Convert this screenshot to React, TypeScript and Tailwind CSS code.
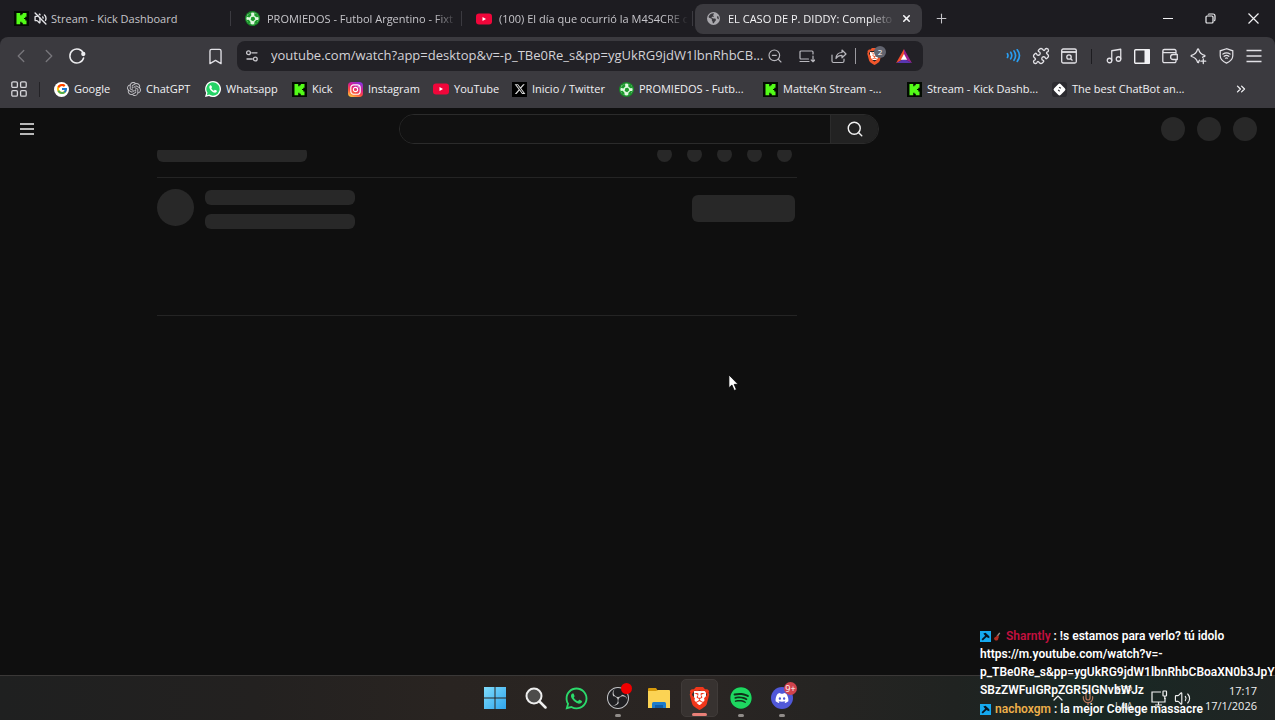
import React from "react";
import { Bookmark, ChevronLeft, ChevronRight, ChevronUp, ChevronsRight, Mic, Music, Plus, Puzzle, Search, VolumeOff, Volume2, X, ZoomOut } from "lucide-react";
import { FaEarthAmericas, FaWhatsapp, FaDiscord, FaSpotify, FaXTwitter } from "react-icons/fa6";
import { FcGoogle } from "react-icons/fc";
import { SiBrave, SiObsstudio, SiOpenai } from "react-icons/si";

const KickIcon = () => (
  <svg viewBox="0 0 32 32" className="size-[15px] shrink-0">
    <path fill="#030a02" d="M0 0h32v32H0z" />
    <path fill="#53fc18" transform="translate(4 4)" d="M1.3 0h8v5.3H12V2.7h2.7V0h8v8H20v2.7h-2.7v2.6H20V16h2.7v8h-8v-2.7H12v-2.6H9.3V24h-8Z" />
  </svg>
);

const YouTubeIcon = () => (
  <svg viewBox="0 0 16 12" className="w-4 shrink-0">
    <rect y=".5" width="16" height="11" rx="3" fill="#f0063a" />
    <path d="M6.500 3.900v4.200L10 6z" fill="#fff" />
  </svg>
);

const BallIcon = () => (
  <svg viewBox="0 0 16 16" className="size-[15px] shrink-0">
    <circle cx="8" cy="8" r="8" fill="#178a27" />
    <circle cx="8" cy="8" r="6.500" fill="#dff8df" />
    <path d="M6.800 6.500l3-.5 1.200 2.700-2.300 2.300-2.700-1.500zM1.800 6l2.400-3.300 2.300-.5.2 2.600-2 2.200zM10 1.800l3 1.700 1.500 3-2.400.2-2.200-1.900zM14.200 9.500l-1.500 3.300-2.900 1.500.3-2.800 1.900-1.900zM1.600 9.500l2.400-.3 1.800 2.300.2 2.700-2.600-1.500z" fill="#1c9a2c" />
  </svg>
);

const WhatsappIcon = () => (
  <svg viewBox="0 0 24 24" className="size-4 shrink-0">
    <path d="M12 0a12 12 0 1 1-6 22.400L0 24l1.700-6A12 12 0 0 1 12 0z" fill="#fff" />
    <path d="M12 2a10 10 0 1 1-5.500 18.400L2.800 21.300l1-3.600A10 10 0 0 1 12 2z" fill="#25d366" />
    <path d="M8.500 6.500c-.5-.3-2 .6-2 2.500 0 4 5 8.500 8.500 8.500 1.500 0 2.800-1 2.800-2.500 0-.6-2.800-2-3.300-1.700l-1 1.200c-1.500-.4-3.500-2.200-4-3.800l1-1.200c.2-.5-1-2.800-2-3z" fill="#fff" />
  </svg>
);

const InstagramIcon = () => (
  <svg viewBox="0 0 16 16" className="size-[15px] shrink-0">
    <defs>
      <linearGradient id="ig" x1="0.2" y1="1" x2="0.7" y2="0">
        <stop offset="0" stopColor="#ffc43d" />
        <stop offset="0.35" stopColor="#fb4b40" />
        <stop offset="0.65" stopColor="#d81e8e" />
        <stop offset="1" stopColor="#8a32dc" />
      </linearGradient>
    </defs>
    <rect width="16" height="16" rx="4" fill="url(#ig)" />
    <rect x="3" y="3" width="10" height="10" rx="3" fill="none" stroke="#fff" strokeWidth="1.2" />
    <circle cx="8" cy="8" r="2.300" fill="none" stroke="#fff" strokeWidth="1.2" />
    <circle cx="10.900" cy="5.100" r=".7" fill="#fff" />
  </svg>
);

const XIcon = () => (
  <span className="flex size-[15px] shrink-0 items-center justify-center bg-black">
    <FaXTwitter className="size-3 text-[#d8d8d8]" />
  </span>
);

const BotIcon = () => (
  <svg viewBox="0 0 16 16" className="size-[15px] shrink-0">
    <rect width="16" height="16" rx="3" fill="#2c2b30" />
    <rect x="3" y="3" width="10" height="10" rx="2" transform="rotate(45 8 8)" fill="#fff" />
    <path d="M7.500 5.500l2 1.200M6.500 8.500l1.800 1.300" stroke="#3b3a3f" fill="none" strokeWidth="1.200" />
  </svg>
);

const ReloadIcon = () => (
  <svg viewBox="0 0 18 18" className="size-[18px]" fill="none" stroke="#ededf0" strokeWidth="1.500" strokeLinecap="round">
    <path d="M15.600 11a7 7 0 1 1-.1-4.300" />
    <circle cx="15.300" cy="7" r="1.400" fill="#ededf0" />
  </svg>
);

const TuneIcon = () => (
  <svg viewBox="0 0 14 14" className="size-3.5 shrink-0" fill="none" stroke="#c9c8cd" strokeWidth="1.300">
    <circle cx="3.500" cy="3.800" r="1.900" />
    <path d="M6.800 3.800H12M2 10h5.200" strokeLinecap="round" />
    <circle cx="10.300" cy="10" r="1.900" />
  </svg>
);

const InstallIcon = () => (
  <svg viewBox="0 0 16 14" className="w-4" fill="none" stroke="#b8b7bd" strokeWidth="1.200" strokeLinecap="round">
    <path d="M9.500 10H2a1 1 0 0 1-1-1V3a1 1 0 0 1 1-1h11a1 1 0 0 1 1 1v2M1 12.500h9M14 7v5.500M12.200 11l1.800 1.700 1.800-1.700" />
  </svg>
);

const ShareIcon = () => (
  <svg viewBox="0 0 16 16" className="size-4" fill="none" stroke="#b8b7bd" strokeWidth="1.200" strokeLinecap="round" strokeLinejoin="round">
    <path d="M1 7v6a1.500 1.500 0 0 0 1.500 1.500h9A1.500 1.500 0 0 0 13 13v-2M5 10.500c.3-4 2.500-6 6-6V2l4 4-4 3.800V7.300c-2.800 0-4.600.8-6 3.200z" />
  </svg>
);

const BatIcon = () => (
  <svg viewBox="0 0 18 16" className="w-4">
    <path d="M9 0 0 16l9-5z" fill="#f24a2c" />
    <path d="M9 0l9 16-9-5z" fill="#9b1f8c" />
    <path d="M0 16h18l-9-5z" fill="#5a35b0" />
    <path d="M9 5.500 5.500 12h7z" fill="#fff" />
  </svg>
);

const SoundWaves = () => (
  <svg viewBox="0 0 16 14" className="w-[15px]" fill="none" stroke="#2a9df0" strokeWidth="1.800" strokeLinecap="round">
    <path d="M1.500 5c.8 1.300.8 2.700 0 4M5 3.500c1.500 2.300 1.500 4.800 0 7M8.500 2c2.200 3.200 2.200 6.800 0 10M12 .8c3.200 4.200 3.200 8.200 0 12.400" />
  </svg>
);

const TabSearchIcon = () => (
  <svg viewBox="0 0 16 16" className="size-4" fill="none" stroke="#e2e1e6" strokeWidth="1.300">
    <rect x=".7" y="1" width="14.600" height="14" rx="1.500" />
    <path d="M.7 4h14.600" strokeWidth="1.800" />
    <circle cx="8" cy="9" r="2.200" />
    <path d="m9.600 10.600 1.900 1.900" />
  </svg>
);

const SidebarIcon = () => (
  <svg viewBox="0 0 16 15" className="w-4">
    <rect x=".7" y=".7" width="14.600" height="13.600" rx="1" fill="none" stroke="#f1f1f4" strokeWidth="1.400" />
    <path d="M10.500 0H15a1 1 0 0 1 1 1v13a1 1 0 0 1-1 1h-4.500z" fill="#f1f1f4" />
  </svg>
);

const WalletIcon = () => (
  <svg viewBox="0 0 16 16" className="size-4" fill="none" stroke="#e2e1e6" strokeWidth="1.300" strokeLinejoin="round">
    <path d="M14 6.300V4.700M.8 3v10.200A1.500 1.500 0 0 0 2.300 14.700h10.200A1.500 1.500 0 0 0 14 13.200v-1.500M14 4.700V3a1.500 1.500 0 0 0-1.500-1.500H2.400C1.500 1.500.8 2.200.8 3.100s.7 1.600 1.600 1.600z" />
    <path d="M15.300 6.500h-4.200a2.500 2.500 0 0 0 0 5h4.200z" />
  </svg>
);

const LeoIcon = () => (
  <svg viewBox="0 0 17 17" className="size-[17px]" fill="none" stroke="#e2e1e6" strokeWidth="1.300" strokeLinejoin="round" strokeLinecap="round">
    <path d="M9.500 12.300c-.5.500-.8 1.300-1 2.200-.5 0-.7 0-1-.3-.7-3-1.900-4.500-6-5.700-.5-.3-.5-.8 0-1.100C5.300 6.300 6.500 5 7.500 1.300c.3-.5.800-.5 1.100 0 1 3.700 2.200 5 6 6.100.5.300.5.800 0 1.100-.8.300-1.500.5-2 .8M13.300 10.800v4.800M10.900 13.200h4.800" />
  </svg>
);

const VpnIcon = () => (
  <svg viewBox="0 0 16 17" className="w-[15px]" fill="none" stroke="#e2e1e6" strokeWidth="1.300" strokeLinecap="round">
    <path d="M8 .8 1.300 3v5.200c0 3.700 2.900 6.200 6.700 7.900 3.800-1.700 6.700-4.200 6.700-7.900V3z" />
    <path d="M4.200 6.500c2.300-1.700 5.300-1.700 7.600 0M5.500 8.800c1.500-1.200 3.500-1.200 5 0M7 10.900c.6-.5 1.400-.5 2 0" />
  </svg>
);

const FolderIcon = () => (
  <svg viewBox="0 0 24 22" className="w-6">
    <path d="M1 2a1 1 0 0 1 1-1h7l2 3H1z" fill="#d79a0b" />
    <path d="M1 4h8l2-1h11a1 1 0 0 1 1 1v17H1z" fill="#fbd354" />
    <path d="M5 21v-4.500A1.500 1.500 0 0 1 6.500 15h11a1.500 1.500 0 0 1 1.500 1.500V21z" fill="#1d7ccb" />
    <path d="M8 18h8v3H8z" fill="#0f5da8" />
  </svg>
);

const WindowsIcon = () => (
  <svg viewBox="0 0 22 22" className="size-[22px]">
    <defs>
      <linearGradient id="win" x1="0" y1="0" x2="1" y2="1">
        <stop offset="0" stopColor="#7fdcfb" />
        <stop offset="1" stopColor="#2fa5ee" />
      </linearGradient>
    </defs>
    <path d="M0 0h10.500v10.500H0zM11.500 0H22v10.500H11.500zM0 11.500h10.500V22H0zM11.500 11.500H22V22H11.500z" fill="url(#win)" />
  </svg>
);

const BraveLion = ({ large = false }: { large?: boolean }) => (
  <span className="relative flex items-center justify-center">
    <span className={large ? "absolute h-3.5 w-3 bg-white" : "absolute size-2 bg-white"} />
    <SiBrave className={large ? "relative size-[23px] text-[#f0371b]" : "relative size-[17px] text-[#f1562b]"} />
  </span>
);

const HammerBadge = () => (
  <svg viewBox="0 0 10 10" className="mr-[2px] inline-block size-[11px] align-[-2px]">
    <path d="M0 0h10v10H0z" fill="#15a9ef" />
    <path d="M3 2.200 5 1.500l3.500 3.300v1.700L6.700 6l-.8-.6L2.600 8.600l-1.200-1.200 3.300-3.100z" fill="#071421" />
  </svg>
);

const GuitarBadge = () => (
  <svg viewBox="0 0 10 10" className="mr-[4px] inline-block size-[9px] align-[-1px]">
    <path d="m4.500 5 3-4" stroke="#9c8a80" strokeWidth="1.500" />
    <path d="M5 3.800c1.900.5 1.700 2.400.9 3.200.2 1.800-1.500 3-3.100 2.400C.9 8.500.7 6.500 2.100 5.800 3.200 5.600 3.600 4.200 5 3.800z" fill="#b32e22" />
  </svg>
);

const tabs = [
  { label: "Stream - Kick Dashboard", icon: <KickIcon />, muted: true },
  { label: "PROMIEDOS - Futbol Argentino - Fixt", icon: <BallIcon /> },
  { label: "(100) El día que ocurrió la M4S4CRE c", icon: <YouTubeIcon /> },
];

const bookmarks = [
  { label: "Google", width: "w-[73px]", icon: <span className="flex size-[15px] shrink-0 items-center justify-center rounded-full bg-white"><FcGoogle className="size-3" /></span> },
  { label: "ChatGPT", width: "w-[78px]", icon: <SiOpenai className="size-3.5 shrink-0 text-[#c4c3c8]" /> },
  { label: "Whatsapp", width: "w-[87px]", icon: <WhatsappIcon /> },
  { label: "Kick", width: "w-[56px]", icon: <KickIcon /> },
  { label: "Instagram", width: "w-[85px]", icon: <InstagramIcon /> },
  { label: "YouTube", width: "w-[79px]", icon: <YouTubeIcon /> },
  { label: "Inicio / Twitter", width: "w-[107px]", icon: <XIcon /> },
  { label: "PROMIEDOS - Futb...", width: "w-[144px]", icon: <BallIcon /> },
  { label: "MatteKn Stream -...", width: "w-[144px]", icon: <KickIcon /> },
  { label: "Stream - Kick Dashb...", width: "w-[145px]", icon: <KickIcon /> },
  { label: "The best ChatBot an...", width: "w-[145px]", icon: <BotIcon /> },
];

function TabStrip() {
  return (
    <div className="flex h-[37px] shrink-0 items-center text-[11px] leading-4 text-[#c6c5ca]">
      {tabs.map((t) => (
        <button key={t.label} className="flex h-[15px] w-[231px] min-w-0 items-center border-r border-[#3b3a40] pl-3.5 pr-1 text-left">
          {t.icon}
          {t.muted && <VolumeOff className="ml-[5px] size-[13px] shrink-0 text-[#e6e6ea]" strokeWidth={2.5} />}
          <span className={t.muted ? "ml-1 flex-1 overflow-hidden whitespace-nowrap" : "ml-[7px] flex-1 overflow-hidden whitespace-nowrap [mask-image:linear-gradient(to_right,black_88%,transparent)]"}>{t.label}</span>
        </button>
      ))}
      <div className="ml-0.5 flex h-[30px] w-[227px] min-w-0 items-center rounded-lg bg-[#3b3a3f] pl-3 pr-2.5 text-[#f4f4f6]">
        <FaEarthAmericas className="size-[13px] shrink-0 text-[#aaa9ae]" />
        <span className="ml-2 mr-1.5 flex-1 overflow-hidden whitespace-nowrap [mask-image:linear-gradient(to_right,black_85%,transparent)]">EL CASO DE P. DIDDY: Completo</span>
        <button aria-label="Close tab"><X className="size-[11px]" strokeWidth={3.500} /></button>
      </div>
      <button aria-label="New tab" className="ml-3"><Plus className="size-[15px]" strokeWidth={1.700} /></button>
      <div className="ml-auto flex h-full text-[#f1f1f4]">
        <button aria-label="Minimize" className="flex w-[43px] items-center justify-center"><span className="h-px w-2.5 bg-[#f1f1f4]" /></button>
        <button aria-label="Restore" className="flex w-[43px] items-center justify-center">
          <svg viewBox="0 0 11 11" className="size-[11px]" fill="none" stroke="currentColor" strokeWidth="1.200"><rect x="1" y="3" width="7" height="7" rx="1" /><path d="M3 1.500C3.500.8 4 1 5 1h3c1.500 0 2 .7 2 2v3c0 1 0 1.500-.7 2" /></svg>
        </button>
        <button aria-label="Close" className="flex w-[43px] items-center justify-center">
          <svg viewBox="0 0 11 11" className="size-[11px]" stroke="currentColor" strokeWidth="1.200"><path d="m.5.5 10 10M10.500.5l-10 10" /></svg>
        </button>
      </div>
    </div>
  );
}

function Toolbar() {
  const tool = "flex w-7 items-center justify-center text-[#e2e1e6]";
  return (
    <div className="flex h-[38px] items-center pr-[7px]">
      <button aria-label="Back" className="ml-[7px] flex w-7 justify-center text-[#77767b]"><ChevronLeft className="size-[22px]" strokeWidth={1.500} /></button>
      <button aria-label="Forward" className="flex w-7 justify-center text-[#77767b]"><ChevronRight className="size-[22px]" strokeWidth={1.500} /></button>
      <button aria-label="Reload" className="flex w-7 justify-center"><ReloadIcon /></button>
      <button aria-label="Bookmark this page" className="ml-[110px] flex w-7 justify-center text-[#e2e1e6]"><Bookmark className="size-[19px]" strokeWidth={1.700} /></button>
      <div className="ml-2 flex h-[30px] w-[686px] min-w-0 items-center rounded-lg bg-[#222126] pl-2 text-[#d3d2d7]">
        <TuneIcon />
        <input aria-label="Address" readOnly defaultValue="youtube.com/watch?app=desktop&v=-p_TBe0Re_s&pp=ygUkRG9jdW1lbnRhbCB..." className="ml-3 min-w-0 flex-1 bg-transparent text-[13px] outline-none" />
        <button aria-label="Zoom" className="mr-1.5 flex w-5 justify-center text-[#b8b7bd]"><ZoomOut className="size-4" strokeWidth={1.700} /></button>
        <button aria-label="Install" className="flex w-8 justify-center"><InstallIcon /></button>
        <button aria-label="Share" className="flex w-8 justify-center"><ShareIcon /></button>
        <span className="h-4 w-px bg-[#9b9aa0]" />
        <button aria-label="Brave Shields" className="relative ml-0.5 flex w-8 justify-center">
          <BraveLion />
          <span className="absolute -top-0.5 right-1 flex size-3 items-center justify-center rounded-full bg-[#62646f] text-[8px] leading-none text-white">2</span>
        </button>
        <button aria-label="Rewards" className="mr-[5px] flex w-7 justify-center"><BatIcon /></button>
      </div>
      <div className="ml-auto flex items-center">
        <button aria-label="Sound" className={tool}><SoundWaves /></button>
        <button aria-label="Extensions" className={tool}><Puzzle className="size-[18px]" strokeWidth={1.700} /></button>
        <button aria-label="Search tabs" className={tool}><TabSearchIcon /></button>
        <span className="mx-2 h-[15px] w-px bg-[#1d1c20]" />
        <button aria-label="Media" className={tool}><Music className="size-[18px]" strokeWidth={1.700} /></button>
        <button aria-label="Sidebar" className={tool}><SidebarIcon /></button>
        <button aria-label="Wallet" className={tool}><WalletIcon /></button>
        <button aria-label="Leo" className={tool}><LeoIcon /></button>
        <button aria-label="VPN" className={tool}><VpnIcon /></button>
        <button aria-label="Menu" className={tool}>
          <svg viewBox="0 0 16 14" className="w-4" stroke="currentColor" strokeWidth="1.400"><path d="M.5 1.500h15M.5 7h15M.5 12.500h15" /></svg>
        </button>
      </div>
    </div>
  );
}

function BookmarksBar() {
  return (
    <nav className="flex h-[33px] items-center pb-[5px] pl-[11px] pr-[27px] text-[11px] leading-4 text-[#f1f1f4]">
      <button aria-label="All bookmarks">
        <svg viewBox="0 0 16 16" className="size-4" fill="none" stroke="#d6d5da" strokeWidth="1.300">
          <rect x=".8" y=".8" width="5.600" height="5.600" rx="1.200" /><rect x="9.600" y=".8" width="5.600" height="5.600" rx="1.200" />
          <rect x=".8" y="9.600" width="5.600" height="5.600" rx="1.200" /><rect x="9.600" y="9.600" width="5.600" height="5.600" rx="1.200" />
        </svg>
      </button>
      <span className="ml-3 mr-[14px] h-[15px] w-px bg-[#232226]" />
      {bookmarks.map((b) => (
        <a key={b.label} href="#" className={`flex items-center gap-[5px] whitespace-nowrap ${b.width}`}>
          {b.icon}
          <span>{b.label}</span>
        </a>
      ))}
      <button aria-label="More bookmarks" className="ml-auto"><ChevronsRight className="size-3.5" strokeWidth={2.200} /></button>
    </nav>
  );
}

function VideoPage() {
  return (
    <div className="flex min-h-0 flex-1 flex-col bg-[#0f0f0f]">
      <header className="grid h-[42px] shrink-0 grid-cols-[1fr_480px_1fr] items-center pl-5 pr-[17px]">
        <button aria-label="Guide" className="w-3.5">
          <svg viewBox="0 0 14 12" className="w-3.5" stroke="#f1f1f1" strokeWidth="1.300"><path d="M0 1h14M0 6h14M0 11h14" /></svg>
        </button>
        <form className="flex h-[30px] overflow-hidden rounded-full border border-[#2b2b2b]" onSubmit={(e) => e.preventDefault()}>
          <input aria-label="Search" className="min-w-0 flex-1 bg-[#111111] px-4 text-sm text-white outline-none" />
          <button aria-label="Search" className="flex w-12 items-center justify-center border-l border-[#2b2b2b] bg-[#222222]"><Search className="size-[18px] text-[#f1f1f1]" strokeWidth={1.900} /></button>
        </form>
        <div className="flex justify-end gap-3 pr-px">
          {[0, 1, 2].map((n) => <span key={n} className="size-6 rounded-full bg-[#282828]" />)}
        </div>
      </header>
      <main className="min-h-0 flex-1 overflow-hidden pl-[157px]">
        <div className="w-[640px] max-w-full">
          <div className="-mt-[3px] flex h-[31px] items-start justify-between border-b border-[#242424] pr-[5px]">
            <span className="h-[15px] w-[150px] rounded-md bg-[#282828]" />
            <div className="flex gap-[15px]">
              {[0, 1, 2, 3, 4].map((n) => <span key={n} className="size-[15px] rounded-full bg-[#282828]" />)}
            </div>
          </div>
          <div className="flex h-[138px] items-start border-b border-[#242424] pr-0.5 pt-[11px]">
            <span className="size-[37px] rounded-full bg-[#282828]" />
            <div className="ml-[11px] flex flex-col gap-[9px] pt-px">
              <span className="h-[15px] w-[150px] rounded-md bg-[#282828]" />
              <span className="h-[15px] w-[150px] rounded-md bg-[#282828]" />
            </div>
            <span className="ml-auto mt-1.5 h-[27px] w-[103px] rounded-md bg-[#282828]" />
          </div>
        </div>
      </main>
    </div>
  );
}

const apps = [
  { name: "Start", icon: <WindowsIcon /> },
  {
    name: "Search",
    icon: <svg viewBox="0 0 22 22" className="size-[22px]"><circle cx="9" cy="9" r="7.500" fill="#4d4c4b" stroke="#eeeeee" strokeWidth="2" /><path d="m14.500 14.500 6 6" stroke="#eeeeee" strokeWidth="2.500" strokeLinecap="round" /></svg>,
  },
  { name: "WhatsApp", icon: <FaWhatsapp className="size-[25px] text-[#2bd96b]" /> },
  { name: "OBS Studio", running: true, badge: "", icon: <span className="rounded-full bg-[#1f1f22]"><SiObsstudio className="size-[22px] text-[#c6c6c8]" /></span> },
  { name: "File Explorer", icon: <FolderIcon /> },
  { name: "Brave", running: true, active: true, icon: <BraveLion large /> },
  { name: "Spotify", running: true, icon: <span className="rounded-full bg-[#10301a]"><FaSpotify className="size-[22px] text-[#1ed760]" /></span> },
  { name: "Discord", running: true, badge: "9+", icon: <span className="flex size-[22px] items-center justify-center rounded-full bg-[#5058d8]"><FaDiscord className="size-3.5 text-white" /></span> },
];

function Taskbar() {
  return (
    <footer className="grid h-[45px] shrink-0 grid-cols-[1fr_auto_1fr] items-center border-t border-[#3a3837] bg-[linear-gradient(to_right,#1f2020,#232120_20%,#292421_35%,#2a2523_55%,#202321_75%,#182824_86%,#202423)]">
      <span />
      <div className="flex pl-px">
        {apps.map((a) => (
          <button key={a.name} aria-label={a.name} className="flex w-[41px] justify-center">
            <span className={a.active ? "relative flex h-[38px] w-[37px] items-center justify-center rounded-[5px] border border-[#403b39] bg-[#373230]" : "relative flex h-[38px] w-[37px] items-center justify-center"}>
              {a.icon}
              {a.badge !== undefined && (
                <span className={a.badge ? "absolute right-[3px] top-[3px] flex size-[13px] items-center justify-center rounded-full bg-[#d0434d] text-[9px] leading-none text-white" : "absolute right-1 top-1 size-[11px] rounded-full bg-[#f00000]"}>{a.badge}</span>
              )}
              {a.running && <span className={a.active ? "absolute bottom-0 h-[3px] w-[15px] rounded-full bg-[#e88078]" : "absolute bottom-0 h-[3px] w-[6px] rounded-full bg-[#908c89]"} />}
            </span>
          </button>
        ))}
      </div>
      <div className="flex items-center justify-end pr-[18px] text-[#f0f0f0]">
        <ChevronUp className="mr-[14px] size-4" strokeWidth={1.800} />
        <Mic className="mr-[19px] size-4 text-[#b9745a]" strokeWidth={1.800} />
        <div className="mr-[18px] text-center text-[10px] leading-4 text-[#c8c8c8]"><p>ESP</p><p>LAA</p></div>
        <svg viewBox="0 0 17 16" className="mr-1.5 w-[17px]" fill="none" stroke="currentColor" strokeWidth="1.200"><path d="M10 2H1v10h13V8M4 15h7M7.500 12v3" /><rect x="12" y="1" width="3.500" height="5" rx=".5" /><path d="M13.800 6v3" /></svg>
        <Volume2 className="mr-[14px] size-[17px]" strokeWidth={1.600} />
        <div className="text-right text-[11px] leading-[15px]"><p>17:17</p><p>17/1/2026</p></div>
      </div>
    </footer>
  );
}

export default function App() {
  return (
    <div className="relative flex h-screen flex-col overflow-hidden bg-[#1d1c21] font-['Open_Sans','Noto_Sans',sans-serif]">
      <TabStrip />
      <div className="shrink-0 rounded-t-lg bg-[#3b3a3f]">
        <Toolbar />
        <BookmarksBar />
      </div>
      <VideoPage />
      <Taskbar />
      <div className="pointer-events-none absolute bottom-0.5 right-0 w-[295px] whitespace-nowrap font-[Roboto,sans-serif] text-[12px] font-semibold leading-[18px] text-white">
        <p><HammerBadge /><GuitarBadge /><span className="text-[#c3103f]">Sharntly</span> : !s estamos para verlo? tú idolo<br />https://m.youtube.com/watch?v=-<br />p_TBe0Re_s&amp;pp=ygUkRG9jdW1lbnRhbCBoaXN0b3JpY<br />SBzZWFuIGRpZGR5IGNvbWJz</p>
        <p className="mt-px"><HammerBadge /><span className="ml-0.5 text-[#edb04a]">nachoxgm</span> : la mejor College massacre</p>
      </div>
      <svg viewBox="0 0 12 19" className="pointer-events-none absolute left-[728px] top-[374px] w-[11px]"><path d="M1 1v14l3.300-3 2.500 6 2.400-1-2.500-5.700H11z" fill="#fff" stroke="#000" strokeWidth=".8" /></svg>
    </div>
  );
}
